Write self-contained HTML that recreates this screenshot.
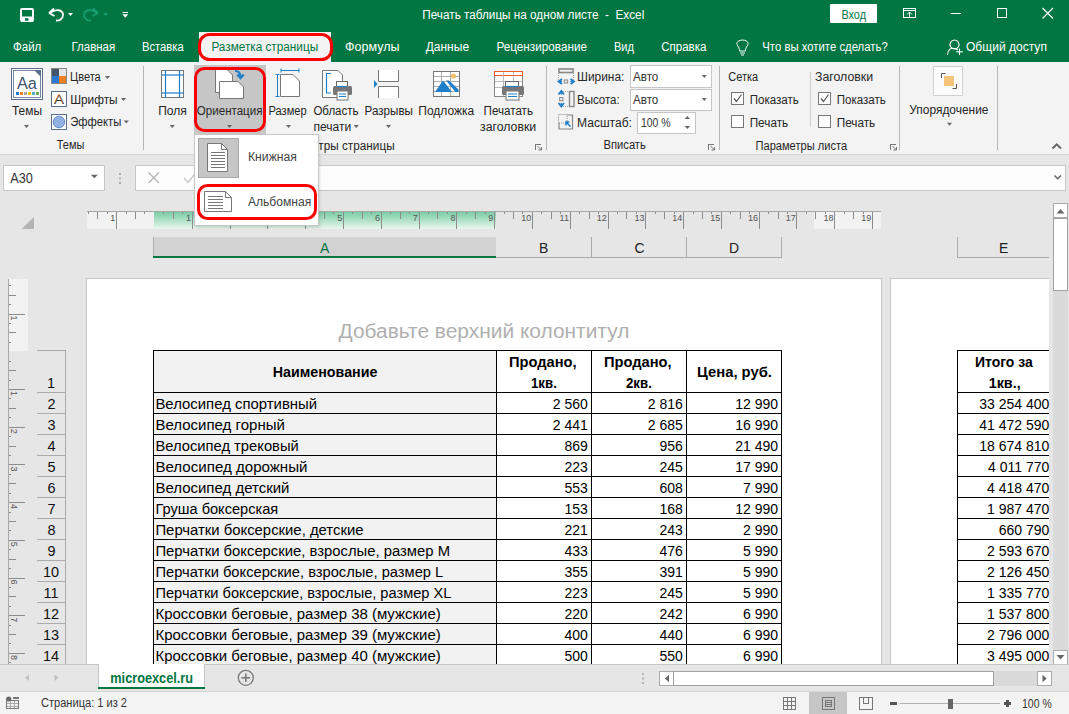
<!DOCTYPE html>
<html><head><meta charset="utf-8"><style>
html,body{margin:0;padding:0;width:1069px;height:714px;overflow:hidden;background:#e6e6e6}
svg{display:block;font-family:"Liberation Sans",sans-serif}
</style></head><body>
<svg width="1069" height="714" viewBox="0 0 1069 714">
<g shape-rendering="crispEdges">
<rect x="0" y="0" width="1069" height="714" fill="#e6e6e6" />
<rect x="0" y="0" width="1069" height="62" fill="#017642" />
<rect x="0" y="62" width="1069" height="92" fill="#f3f3f3" />
<line x1="0" y1="154.5" x2="1069" y2="154.5" stroke="#d6d6d6" stroke-width="1" />
</g>
<rect x="21" y="9" width="12" height="12" fill="none" stroke="#fff" stroke-width="2" rx="1" />
<rect x="21" y="16.5" width="12" height="5.5" fill="#fff" />
<rect x="25" y="18.2" width="3.5" height="2.5" fill="#017642" />
<path d="M50,13 C56,8 63,10 63,15 C63,19 59,21 56,20.5" fill="none" stroke="#fff" stroke-width="1.8" />
<path d="M49,13 L54,8.5 M49,13 L54.5,16" fill="none" stroke="#fff" stroke-width="1.8" />
<path d="M68.0,13.0 L73.0,13.0 L70.5,16.0 Z" fill="#fff" />
<path d="M97,13 C91,8 84,10 84,15 C84,19 88,21 91,20.5" fill="none" stroke="#1a9c70" stroke-width="1.8" />
<path d="M98,13 L93,8.5 M98,13 L92.5,16" fill="none" stroke="#1a9c70" stroke-width="1.8" />
<path d="M103.0,13.0 L108.0,13.0 L105.5,16.0 Z" fill="#1a9c70" />
<line x1="122.5" y1="12.5" x2="128" y2="12.5" stroke="#fff" stroke-width="1" />
<path d="M122.3,14.25 L128.3,14.25 L125.3,17.75 Z" fill="#fff" />
<text x="422.30" y="19" font-size="12" fill="#fff" textLength="221.95" lengthAdjust="spacingAndGlyphs" style="white-space:pre" >Печать таблицы на одном листе  -  Excel</text>
<rect x="830" y="4" width="47" height="19" fill="#fff" rx="1" />
<text x="841.40" y="18.5" font-size="12" fill="#017642" textLength="24.60" lengthAdjust="spacingAndGlyphs" style="white-space:pre" >Вход</text>
<rect x="903.5" y="8.5" width="12" height="9" fill="none" stroke="#fff" stroke-width="1" />
<line x1="903.5" y1="10.5" x2="915.5" y2="10.5" stroke="#fff" stroke-width="1" />
<path d="M909.5,17 V12 M907,14.5 L909.5,12 L912,14.5" fill="none" stroke="#fff" stroke-width="1" />
<line x1="950.5" y1="13.5" x2="961" y2="13.5" stroke="#fff" stroke-width="1" />
<rect x="997.5" y="8.5" width="9" height="9" fill="none" stroke="#fff" stroke-width="1" shape-rendering="crispEdges"/>
<path d="M1042.5,8 L1053,18.5 M1053,8 L1042.5,18.5" fill="none" stroke="#fff" stroke-width="1.1" />
<rect x="199" y="32" width="132" height="30" fill="#f3f3f3" />
<text x="13.00" y="51" font-size="12" fill="#fff" textLength="28.30" lengthAdjust="spacingAndGlyphs" style="white-space:pre" >Файл</text>
<text x="71.50" y="51" font-size="12" fill="#fff" textLength="43.68" lengthAdjust="spacingAndGlyphs" style="white-space:pre" >Главная</text>
<text x="142.00" y="51" font-size="12" fill="#fff" textLength="41.70" lengthAdjust="spacingAndGlyphs" style="white-space:pre" >Вставка</text>
<text x="345.00" y="51" font-size="12" fill="#fff" textLength="54.45" lengthAdjust="spacingAndGlyphs" style="white-space:pre" >Формулы</text>
<text x="425.70" y="51" font-size="12" fill="#fff" textLength="43.37" lengthAdjust="spacingAndGlyphs" style="white-space:pre" >Данные</text>
<text x="496.40" y="51" font-size="12" fill="#fff" textLength="90.58" lengthAdjust="spacingAndGlyphs" style="white-space:pre" >Рецензирование</text>
<text x="614.00" y="51" font-size="12" fill="#fff" textLength="20.00" lengthAdjust="spacingAndGlyphs" style="white-space:pre" >Вид</text>
<text x="661.20" y="51" font-size="12" fill="#fff" textLength="45.19" lengthAdjust="spacingAndGlyphs" style="white-space:pre" >Справка</text>
<text x="762.30" y="51" font-size="12" fill="#fff" textLength="125.39" lengthAdjust="spacingAndGlyphs" style="white-space:pre" >Что вы хотите сделать?</text>
<text x="966.00" y="51" font-size="12" fill="#fff" textLength="80.90" lengthAdjust="spacingAndGlyphs" style="white-space:pre" >Общий доступ</text>
<text x="211.40" y="51" font-size="12" fill="#017642" textLength="106.71" lengthAdjust="spacingAndGlyphs" style="white-space:pre" >Разметка страницы</text>
<rect x="199.5" y="34.5" width="132" height="25" fill="none" stroke="#fa0000" stroke-width="3" rx="10" />
<path d="M738.5,47 C736,44 736,40.5 742.5,40 C749,40.5 749,44 746.5,47 C745.5,48.5 745.5,50 745.5,51 H739.5 C739.5,50 739.5,48.5 738.5,47 Z" fill="none" stroke="#fff" stroke-width="1" />
<line x1="740" y1="53" x2="745" y2="53" stroke="#fff" stroke-width="1" />
<line x1="741" y1="55" x2="744" y2="55" stroke="#fff" stroke-width="1" />
<path d="M954.5,40 A4.5,4.5 0 1 1 954.49,40 Z" fill="none" stroke="#fff" stroke-width="1.1" />
<path d="M947.5,55 C948,49 951,47.5 954.5,48.5 C956,48.7 957,49.3 958,50" fill="none" stroke="#fff" stroke-width="1.1" />
<line x1="959.5" y1="48.5" x2="959.5" y2="55" stroke="#fff" stroke-width="1.1" />
<line x1="956.2" y1="51.8" x2="962.8" y2="51.8" stroke="#fff" stroke-width="1.1" />
<rect x="11.5" y="68.5" width="31" height="31" fill="#fff" stroke="#5a6e8c" stroke-width="1" />
<rect x="13.5" y="70.5" width="27" height="27" fill="none" stroke="#5a6e8c" stroke-width="0.8" />
<path d="M34,70 L41,70 L41,77 Z" fill="#5a6e8c" />
<text x="17.00" y="89" font-size="16" fill="#3f5573" textLength="19.90" lengthAdjust="spacingAndGlyphs" style="white-space:pre" >Aa</text>
<rect x="16" y="92" width="3" height="3" fill="#2a7ad5" />
<rect x="20" y="92" width="3" height="3" fill="#f07f20" />
<rect x="24" y="92" width="3" height="3" fill="#a5a5a5" />
<rect x="28" y="92" width="3" height="3" fill="#ffc000" />
<rect x="32" y="92" width="3" height="3" fill="#4bacc6" />
<rect x="36" y="92" width="3" height="3" fill="#70ad47" />
<text x="12.00" y="114.7" font-size="12" fill="#262626" textLength="30.02" lengthAdjust="spacingAndGlyphs" style="white-space:pre" >Темы</text>
<path d="M24.0,125.0 L29.0,125.0 L26.5,128.0 Z" fill="#666" />
<rect x="51.5" y="68.5" width="15" height="15" fill="none" stroke="#888" stroke-width="1" />
<rect x="52" y="69" width="7" height="7" fill="#44546a" />
<rect x="59" y="69" width="7" height="7" fill="#e7e6e6" />
<rect x="52" y="76" width="7" height="7" fill="#2a7ad5" />
<rect x="59" y="76" width="7" height="7" fill="#f07f20" />
<text x="70.00" y="81" font-size="12" fill="#262626" textLength="30.70" lengthAdjust="spacingAndGlyphs" style="white-space:pre" >Цвета</text>
<path d="M105.0,76.0 L110.0,76.0 L107.5,79.0 Z" fill="#666" />
<rect x="51.5" y="91.5" width="15" height="15" fill="#fff" stroke="#5a6e8c" stroke-width="1" />
<text x="54.00" y="103.5" font-size="12" fill="#333" textLength="10.00" lengthAdjust="spacingAndGlyphs" style="white-space:pre" >A</text>
<path d="M55,103 L59,94 L63,103" fill="none" stroke="#e07020" stroke-width="0.6" />
<text x="70.20" y="103.8" font-size="12" fill="#262626" textLength="47.42" lengthAdjust="spacingAndGlyphs" style="white-space:pre" >Шрифты</text>
<path d="M121.0,98.0 L126.0,98.0 L123.5,101.0 Z" fill="#666" />
<rect x="51.5" y="114.5" width="15" height="15" fill="#fff" stroke="#5a6e8c" stroke-width="1" />
<circle cx="59" cy="122" r="5.8" fill="#8fb0e0" stroke="#4a7cc8" stroke-width="0.8"/>
<text x="70.20" y="126" font-size="12" fill="#262626" textLength="51.09" lengthAdjust="spacingAndGlyphs" style="white-space:pre" >Эффекты</text>
<path d="M123.8,120.5 L128.8,120.5 L126.3,123.5 Z" fill="#666" />
<text x="56.80" y="149.4" font-size="12" fill="#262626" textLength="27.57" lengthAdjust="spacingAndGlyphs" style="white-space:pre" >Темы</text>
<line x1="143.5" y1="66" x2="143.5" y2="150" stroke="#b8b8b8" stroke-width="1" shape-rendering="crispEdges"/>
<rect x="161.5" y="70.5" width="22" height="27" fill="#fff" stroke="#777" stroke-width="1" />
<line x1="165.5" y1="70.5" x2="165.5" y2="97.5" stroke="#1f7ec8" stroke-width="1.2" />
<line x1="179.5" y1="70.5" x2="179.5" y2="97.5" stroke="#1f7ec8" stroke-width="1.2" />
<line x1="161.5" y1="75" x2="183.5" y2="75" stroke="#1f7ec8" stroke-width="1.2" />
<line x1="161.5" y1="93" x2="183.5" y2="93" stroke="#1f7ec8" stroke-width="1.2" />
<text x="158.20" y="114.7" font-size="12" fill="#262626" textLength="28.60" lengthAdjust="spacingAndGlyphs" style="white-space:pre" >Поля</text>
<path d="M169.8,125.0 L174.8,125.0 L172.3,128.0 Z" fill="#666" />
<rect x="194" y="65" width="72" height="69" fill="#c6c6c6" />
<path d="M215.5,69.5 H227 L232.5,75 V92.5 H215.5 Z" fill="#fff" stroke="#777" stroke-width="1" />
<path d="M219.5,81.5 H238 L243.5,87 V98.5 H219.5 Z" fill="#fff" stroke="#777" stroke-width="1" />
<path d="M235,71 C239,71 240.5,73 240.5,77" fill="none" stroke="#1f7ec8" stroke-width="2.2" />
<path d="M237.2,74.5 L240.5,78.2 L243.8,74.5" fill="none" stroke="#1f7ec8" stroke-width="2.2" />
<text x="196.80" y="114.7" font-size="12" fill="#262626" textLength="65.68" lengthAdjust="spacingAndGlyphs" style="white-space:pre" >Ориентация</text>
<path d="M227.0,125.0 L232.0,125.0 L229.5,128.0 Z" fill="#666" />
<rect x="195.5" y="68.5" width="69" height="62" fill="none" stroke="#fa0000" stroke-width="3" rx="9" />
<path d="M280.5,74.5 H293 L299.5,81 V96.5 H280.5 Z" fill="#fff" stroke="#777" stroke-width="1" />
<line x1="281" y1="70.5" x2="299" y2="70.5" stroke="#1f7ec8" stroke-width="1" />
<line x1="281" y1="68.5" x2="281" y2="72.5" stroke="#1f7ec8" stroke-width="1" />
<line x1="299" y1="68.5" x2="299" y2="72.5" stroke="#1f7ec8" stroke-width="1" />
<line x1="277.5" y1="74" x2="277.5" y2="96" stroke="#1f7ec8" stroke-width="1" />
<line x1="275.5" y1="74.5" x2="279.5" y2="74.5" stroke="#1f7ec8" stroke-width="1" />
<line x1="275.5" y1="96.5" x2="279.5" y2="96.5" stroke="#1f7ec8" stroke-width="1" />
<text x="268.50" y="114.7" font-size="12" fill="#262626" textLength="38.20" lengthAdjust="spacingAndGlyphs" style="white-space:pre" >Размер</text>
<path d="M286.0,125.0 L291.0,125.0 L288.5,128.0 Z" fill="#666" />
<path d="M322.5,70.5 H338 L342.5,75 V97.5 H322.5 Z" fill="#fff" stroke="#777" stroke-width="1" />
<path d="M331,73.5 H326.5 V93 H331" fill="none" stroke="#1f7ec8" stroke-width="1.2" />
<rect x="336.5" y="81.5" width="11" height="6" fill="#fff" stroke="#666" stroke-width="1" />
<rect x="333" y="86" width="19" height="9" fill="#777" rx="1.5" />
<line x1="337" y1="86.5" x2="347" y2="86.5" stroke="#1f7ec8" stroke-width="1.2" />
<rect x="337" y="91" width="11" height="9" fill="#fff" stroke="#777" stroke-width="1" />
<line x1="339" y1="94" x2="346" y2="94" stroke="#1f7ec8" stroke-width="1" />
<line x1="339" y1="96.5" x2="346" y2="96.5" stroke="#1f7ec8" stroke-width="1" />
<text x="313.40" y="114.7" font-size="12" fill="#262626" textLength="45.14" lengthAdjust="spacingAndGlyphs" style="white-space:pre" >Область</text>
<text x="313.40" y="130.8" font-size="12" fill="#262626" textLength="37.91" lengthAdjust="spacingAndGlyphs" style="white-space:pre" >печати</text>
<path d="M353.8,125.0 L358.8,125.0 L356.3,128.0 Z" fill="#666" />
<rect x="378.5" y="70" width="20" height="11" fill="#fff" />
<path d="M378.5,70 V81.5 H398.5 V70" fill="none" stroke="#777" stroke-width="1" />
<rect x="378.5" y="86.5" width="20" height="11.5" fill="#fff" />
<path d="M378.5,98 V86.5 H398.5 V98" fill="none" stroke="#777" stroke-width="1" />
<path d="M374,80 L377.5,84 L374,88 Z" fill="#1f7ec8" />
<text x="364.60" y="114.7" font-size="12" fill="#262626" textLength="48.30" lengthAdjust="spacingAndGlyphs" style="white-space:pre" >Разрывы</text>
<path d="M386.0,125.0 L391.0,125.0 L388.5,128.0 Z" fill="#666" />
<rect x="433.5" y="71.5" width="26" height="25" fill="#fff" stroke="#777" stroke-width="1" />
<line x1="434" y1="76.5" x2="459" y2="76.5" stroke="#999" stroke-width="0.8" />
<line x1="434" y1="81.5" x2="459" y2="81.5" stroke="#999" stroke-width="0.8" />
<line x1="434" y1="86.5" x2="459" y2="86.5" stroke="#999" stroke-width="0.8" />
<line x1="434" y1="91.5" x2="459" y2="91.5" stroke="#999" stroke-width="0.8" />
<line x1="441.5" y1="72" x2="441.5" y2="96" stroke="#999" stroke-width="0.8" />
<line x1="450.5" y1="72" x2="450.5" y2="96" stroke="#999" stroke-width="0.8" />
<circle cx="453.5" cy="76" r="2.6" fill="#f2c26a"/>
<path d="M435,92 L443,80.5 L452,92 Z" fill="#1f7ec8" />
<path d="M446,80.5 L449,80.5 L458.5,89.5 V92 H455.5 Z" fill="#1f7ec8" />
<text x="418.30" y="114.7" font-size="12" fill="#262626" textLength="55.87" lengthAdjust="spacingAndGlyphs" style="white-space:pre" >Подложка</text>
<rect x="494.5" y="71.5" width="28" height="25" fill="#fff" stroke="#888" stroke-width="1" />
<rect x="494.5" y="71.5" width="28" height="4" fill="#fff" stroke="#f05a28" stroke-width="1" />
<line x1="503.5" y1="72" x2="503.5" y2="96" stroke="#aaa" stroke-width="0.8" />
<line x1="513.5" y1="72" x2="513.5" y2="96" stroke="#aaa" stroke-width="0.8" />
<line x1="495" y1="81.5" x2="522" y2="81.5" stroke="#aaa" stroke-width="0.8" />
<line x1="495" y1="87.5" x2="522" y2="87.5" stroke="#aaa" stroke-width="0.8" />
<rect x="505.5" y="81.5" width="13" height="6" fill="#fff" stroke="#666" stroke-width="1" />
<rect x="502" y="86" width="22" height="9" fill="#777" rx="1.5" />
<line x1="506" y1="86.5" x2="518" y2="86.5" stroke="#1f7ec8" stroke-width="1.2" />
<rect x="506" y="91" width="13" height="9" fill="#fff" stroke="#777" stroke-width="1" />
<line x1="508" y1="94" x2="517" y2="94" stroke="#1f7ec8" stroke-width="1" />
<line x1="508" y1="96.5" x2="517" y2="96.5" stroke="#1f7ec8" stroke-width="1" />
<text x="483.60" y="114.7" font-size="12" fill="#262626" textLength="49.34" lengthAdjust="spacingAndGlyphs" style="white-space:pre" >Печатать</text>
<text x="480.00" y="130.8" font-size="12" fill="#262626" textLength="56.22" lengthAdjust="spacingAndGlyphs" style="white-space:pre" >заголовки</text>
<text x="276.00" y="149.8" font-size="12" fill="#262626" textLength="118.61" lengthAdjust="spacingAndGlyphs" style="white-space:pre" >Параметры страницы</text>
<path d="M535.5,149.5 V144.0 H541" fill="none" stroke="#777" stroke-width="1" shape-rendering="crispEdges"/>
<path d="M537.5,146.0 L541.5,150.0 M541.5,147.0 V150.0 H538.5" fill="none" stroke="#777" stroke-width="1" />
<line x1="546.5" y1="66" x2="546.5" y2="150" stroke="#b8b8b8" stroke-width="1" shape-rendering="crispEdges"/>
<rect x="559" y="69" width="14" height="3.5" fill="none" stroke="#888" stroke-width="1.6" />
<line x1="558.5" y1="73" x2="558.5" y2="80" stroke="#999" stroke-width="0.8" stroke-dasharray="1,1"/>
<line x1="573.5" y1="73" x2="573.5" y2="80" stroke="#999" stroke-width="0.8" stroke-dasharray="1,1"/>
<path d="M562,79 L558.5,81.5 L562,84 M570.5,79 L574,81.5 L570.5,84" fill="none" stroke="#1f7ec8" stroke-width="1.8" />
<line x1="559" y1="81.5" x2="562" y2="81.5" stroke="#1f7ec8" stroke-width="1.5" />
<line x1="570.5" y1="81.5" x2="573.5" y2="81.5" stroke="#1f7ec8" stroke-width="1.5" />
<rect x="564.3" y="80" width="3.4" height="3" fill="none" stroke="#888" stroke-width="1" />
<text x="577.00" y="81" font-size="12" fill="#262626" textLength="47.33" lengthAdjust="spacingAndGlyphs" style="white-space:pre" >Ширина:</text>
<rect x="630.5" y="65.5" width="81" height="22" fill="#fff" stroke="#c6c6c6" stroke-width="1" />
<text x="633.00" y="81" font-size="12" fill="#333" textLength="25.28" lengthAdjust="spacingAndGlyphs" style="white-space:pre" >Авто</text>
<path d="M701.8,75.0 L706.8,75.0 L704.3,78.0 Z" fill="#666" />
<rect x="569.5" y="91.5" width="4.5" height="15" fill="none" stroke="#888" stroke-width="1.4" />
<line x1="563" y1="91.5" x2="569" y2="91.5" stroke="#999" stroke-width="0.8" stroke-dasharray="1,1"/>
<line x1="563" y1="106.5" x2="569" y2="106.5" stroke="#999" stroke-width="0.8" stroke-dasharray="1,1"/>
<path d="M558.5,94.5 L561.3,91 L564,94.5 M558.5,103 L561.3,106.5 L564,103" fill="none" stroke="#1f7ec8" stroke-width="1.8" />
<line x1="561.3" y1="91.5" x2="561.3" y2="94.5" stroke="#1f7ec8" stroke-width="1.5" />
<line x1="561.3" y1="103" x2="561.3" y2="106" stroke="#1f7ec8" stroke-width="1.5" />
<rect x="559.7" y="97.5" width="3.2" height="3.2" fill="none" stroke="#888" stroke-width="1" />
<text x="577.00" y="103.8" font-size="12" fill="#262626" textLength="42.72" lengthAdjust="spacingAndGlyphs" style="white-space:pre" >Высота:</text>
<rect x="630.5" y="89.5" width="81" height="21" fill="#fff" stroke="#c6c6c6" stroke-width="1" />
<text x="633.00" y="103.8" font-size="12" fill="#333" textLength="25.28" lengthAdjust="spacingAndGlyphs" style="white-space:pre" >Авто</text>
<path d="M701.8,98.0 L706.8,98.0 L704.3,101.0 Z" fill="#666" />
<rect x="558.5" y="114.5" width="8.5" height="8.5" fill="none" stroke="#888" stroke-width="1" stroke-dasharray="1,1"/>
<path d="M567,115 H572.5 V129 H559 V123" fill="none" stroke="#888" stroke-width="1.2" />
<path d="M570.5,126.5 L566,122 M566,125.5 V122 H569.5" fill="none" stroke="#1f7ec8" stroke-width="1.5" />
<text x="577.00" y="126.5" font-size="12" fill="#262626" textLength="54.94" lengthAdjust="spacingAndGlyphs" style="white-space:pre" >Масштаб:</text>
<rect x="637.5" y="112.5" width="58" height="21" fill="#fff" stroke="#c6c6c6" stroke-width="1" />
<text x="641.00" y="126.5" font-size="12" fill="#333" textLength="29.61" lengthAdjust="spacingAndGlyphs" style="white-space:pre" >100 %</text>
<path d="M684.7,119 L687.35,116 L690,119 Z" fill="#666" />
<path d="M684.7,126 L690,126 L687.35,129 Z" fill="#666" />
<text x="603.50" y="149.2" font-size="12" fill="#262626" textLength="42.34" lengthAdjust="spacingAndGlyphs" style="white-space:pre" >Вписать</text>
<path d="M708.5,149.5 V144.0 H714" fill="none" stroke="#777" stroke-width="1" shape-rendering="crispEdges"/>
<path d="M710.5,146.0 L714.5,150.0 M714.5,147.0 V150.0 H711.5" fill="none" stroke="#777" stroke-width="1" />
<line x1="719.5" y1="66" x2="719.5" y2="150" stroke="#b8b8b8" stroke-width="1" shape-rendering="crispEdges"/>
<text x="728.30" y="80.8" font-size="12" fill="#262626" textLength="29.90" lengthAdjust="spacingAndGlyphs" style="white-space:pre" >Сетка</text>
<text x="815.00" y="80.8" font-size="12" fill="#262626" textLength="58.02" lengthAdjust="spacingAndGlyphs" style="white-space:pre" >Заголовки</text>
<rect x="731.5" y="92.5" width="12" height="12" fill="#fff" stroke="#777" stroke-width="1" />
<path d="M734.0,98.5 L736.5,101.5 L741.5,94.5" fill="none" stroke="#555" stroke-width="1.2" />
<rect x="731.5" y="115.5" width="12" height="12" fill="#fff" stroke="#777" stroke-width="1" />
<rect x="818.5" y="92.5" width="12" height="12" fill="#fff" stroke="#777" stroke-width="1" />
<path d="M821.0,98.5 L823.5,101.5 L828.5,94.5" fill="none" stroke="#555" stroke-width="1.2" />
<rect x="818.5" y="115.5" width="12" height="12" fill="#fff" stroke="#777" stroke-width="1" />
<text x="749.70" y="103.5" font-size="12" fill="#262626" textLength="49.04" lengthAdjust="spacingAndGlyphs" style="white-space:pre" >Показать</text>
<text x="749.70" y="126.6" font-size="12" fill="#262626" textLength="38.45" lengthAdjust="spacingAndGlyphs" style="white-space:pre" >Печать</text>
<text x="836.70" y="103.5" font-size="12" fill="#262626" textLength="49.14" lengthAdjust="spacingAndGlyphs" style="white-space:pre" >Показать</text>
<text x="836.70" y="126.6" font-size="12" fill="#262626" textLength="38.55" lengthAdjust="spacingAndGlyphs" style="white-space:pre" >Печать</text>
<line x1="810.5" y1="72" x2="810.5" y2="127" stroke="#d0d0d0" stroke-width="1" shape-rendering="crispEdges"/>
<text x="755.50" y="149.7" font-size="12" fill="#262626" textLength="91.60" lengthAdjust="spacingAndGlyphs" style="white-space:pre" >Параметры листа</text>
<path d="M890.5,149.5 V144.0 H896" fill="none" stroke="#777" stroke-width="1" shape-rendering="crispEdges"/>
<path d="M892.5,146.0 L896.5,150.0 M896.5,147.0 V150.0 H893.5" fill="none" stroke="#777" stroke-width="1" />
<line x1="899.5" y1="66" x2="899.5" y2="150" stroke="#b8b8b8" stroke-width="1" shape-rendering="crispEdges"/>
<rect x="933.5" y="66.5" width="29" height="29" fill="#fbfbfb" stroke="#d0d0d0" stroke-width="1" />
<rect x="944" y="76" width="10" height="10" fill="#f4c37a" />
<path d="M941.5,78 V73.5 H945.5" fill="none" stroke="#555" stroke-width="1" />
<path d="M956.5,84 V88.5 H952.5" fill="none" stroke="#555" stroke-width="1" />
<text x="909.30" y="113.6" font-size="12" fill="#262626" textLength="79.18" lengthAdjust="spacingAndGlyphs" style="white-space:pre" >Упорядочение</text>
<path d="M947.0,122.8 L952.0,122.8 L949.5,125.8 Z" fill="#666" />
<line x1="997.5" y1="66" x2="997.5" y2="150" stroke="#b8b8b8" stroke-width="1" shape-rendering="crispEdges"/>
<path d="M1052.5,148.5 L1056.7,144.3 L1061,148.5" fill="none" stroke="#666" stroke-width="2" />
<g shape-rendering="crispEdges">
<rect x="3.5" y="165.5" width="101" height="25" fill="#fff" stroke="#c6c6c6" stroke-width="1" />
<rect x="135.5" y="165.5" width="930" height="25" fill="#fdfdfd" stroke="#c6c6c6" stroke-width="1" />
</g>
<text x="10.30" y="183" font-size="14" fill="#333" textLength="22.51" lengthAdjust="spacingAndGlyphs" style="white-space:pre" >A30</text>
<path d="M90.8,174.75 L97.8,174.75 L94.3,178.25 Z" fill="#666" />
<rect x="119" y="173" width="2" height="2" fill="#b0b0b0" />
<rect x="119" y="177.5" width="2" height="2" fill="#b0b0b0" />
<rect x="119" y="182" width="2" height="2" fill="#b0b0b0" />
<path d="M148.5,172.5 L159,183 M159,172.5 L148.5,183" fill="none" stroke="#b4b4b4" stroke-width="1.4" />
<path d="M184,178 L188,182.5 L196,172.5" fill="none" stroke="#c8c8c8" stroke-width="1.4" />
<path d="M1054.5,175.5 L1057.7,178.7 L1061,175.5" fill="none" stroke="#666" stroke-width="1.6" />
<defs><linearGradient id="gr" x1="0" y1="0" x2="0" y2="1"><stop offset="0" stop-color="#79cda3"/><stop offset="1" stop-color="#e9f6ef"/></linearGradient></defs>
<g shape-rendering="crispEdges">
<rect x="87" y="212" width="67" height="17" fill="#f2f2f2" />
<rect x="814" y="212" width="67" height="17" fill="#f2f2f2" />
<rect x="154" y="212" width="342" height="17" fill="url(#gr)" />
<line x1="87" y1="211.5" x2="881" y2="211.5" stroke="#a8a8a8" stroke-width="1" />
<line x1="88.5" y1="212" x2="88.5" y2="213.5" stroke="#8c8c8c" stroke-width="1" />
<line x1="97.5" y1="212" x2="97.5" y2="219" stroke="#8c8c8c" stroke-width="1" />
<line x1="107.5" y1="212" x2="107.5" y2="213.5" stroke="#8c8c8c" stroke-width="1" />
<line x1="116.5" y1="212" x2="116.5" y2="229" stroke="#8c8c8c" stroke-width="1" />
<line x1="126.5" y1="212" x2="126.5" y2="213.5" stroke="#8c8c8c" stroke-width="1" />
<line x1="135.5" y1="212" x2="135.5" y2="219" stroke="#8c8c8c" stroke-width="1" />
<line x1="144.5" y1="212" x2="144.5" y2="213.5" stroke="#8c8c8c" stroke-width="1" />
<line x1="163.5" y1="212" x2="163.5" y2="213.5" stroke="#8c8c8c" stroke-width="1" />
<line x1="173.5" y1="212" x2="173.5" y2="219" stroke="#8c8c8c" stroke-width="1" />
<line x1="182.5" y1="212" x2="182.5" y2="213.5" stroke="#8c8c8c" stroke-width="1" />
<line x1="192.5" y1="212" x2="192.5" y2="229" stroke="#8c8c8c" stroke-width="1" />
<line x1="201.5" y1="212" x2="201.5" y2="213.5" stroke="#8c8c8c" stroke-width="1" />
<line x1="211.5" y1="212" x2="211.5" y2="219" stroke="#8c8c8c" stroke-width="1" />
<line x1="220.5" y1="212" x2="220.5" y2="213.5" stroke="#8c8c8c" stroke-width="1" />
<line x1="230.5" y1="212" x2="230.5" y2="229" stroke="#8c8c8c" stroke-width="1" />
<line x1="239.5" y1="212" x2="239.5" y2="213.5" stroke="#8c8c8c" stroke-width="1" />
<line x1="248.5" y1="212" x2="248.5" y2="219" stroke="#8c8c8c" stroke-width="1" />
<line x1="258.5" y1="212" x2="258.5" y2="213.5" stroke="#8c8c8c" stroke-width="1" />
<line x1="267.5" y1="212" x2="267.5" y2="229" stroke="#8c8c8c" stroke-width="1" />
<line x1="277.5" y1="212" x2="277.5" y2="213.5" stroke="#8c8c8c" stroke-width="1" />
<line x1="286.5" y1="212" x2="286.5" y2="219" stroke="#8c8c8c" stroke-width="1" />
<line x1="296.5" y1="212" x2="296.5" y2="213.5" stroke="#8c8c8c" stroke-width="1" />
<line x1="305.5" y1="212" x2="305.5" y2="229" stroke="#8c8c8c" stroke-width="1" />
<line x1="315.5" y1="212" x2="315.5" y2="213.5" stroke="#8c8c8c" stroke-width="1" />
<line x1="324.5" y1="212" x2="324.5" y2="219" stroke="#8c8c8c" stroke-width="1" />
<line x1="333.5" y1="212" x2="333.5" y2="213.5" stroke="#8c8c8c" stroke-width="1" />
<line x1="343.5" y1="212" x2="343.5" y2="229" stroke="#8c8c8c" stroke-width="1" />
<line x1="352.5" y1="212" x2="352.5" y2="213.5" stroke="#8c8c8c" stroke-width="1" />
<line x1="362.5" y1="212" x2="362.5" y2="219" stroke="#8c8c8c" stroke-width="1" />
<line x1="371.5" y1="212" x2="371.5" y2="213.5" stroke="#8c8c8c" stroke-width="1" />
<line x1="381.5" y1="212" x2="381.5" y2="229" stroke="#8c8c8c" stroke-width="1" />
<line x1="390.5" y1="212" x2="390.5" y2="213.5" stroke="#8c8c8c" stroke-width="1" />
<line x1="400.5" y1="212" x2="400.5" y2="219" stroke="#8c8c8c" stroke-width="1" />
<line x1="409.5" y1="212" x2="409.5" y2="213.5" stroke="#8c8c8c" stroke-width="1" />
<line x1="419.5" y1="212" x2="419.5" y2="229" stroke="#8c8c8c" stroke-width="1" />
<line x1="428.5" y1="212" x2="428.5" y2="213.5" stroke="#8c8c8c" stroke-width="1" />
<line x1="437.5" y1="212" x2="437.5" y2="219" stroke="#8c8c8c" stroke-width="1" />
<line x1="447.5" y1="212" x2="447.5" y2="213.5" stroke="#8c8c8c" stroke-width="1" />
<line x1="456.5" y1="212" x2="456.5" y2="229" stroke="#8c8c8c" stroke-width="1" />
<line x1="466.5" y1="212" x2="466.5" y2="213.5" stroke="#8c8c8c" stroke-width="1" />
<line x1="475.5" y1="212" x2="475.5" y2="219" stroke="#8c8c8c" stroke-width="1" />
<line x1="485.5" y1="212" x2="485.5" y2="213.5" stroke="#8c8c8c" stroke-width="1" />
<line x1="494.5" y1="212" x2="494.5" y2="229" stroke="#8c8c8c" stroke-width="1" />
<line x1="504.5" y1="212" x2="504.5" y2="213.5" stroke="#8c8c8c" stroke-width="1" />
<line x1="513.5" y1="212" x2="513.5" y2="219" stroke="#8c8c8c" stroke-width="1" />
<line x1="522.5" y1="212" x2="522.5" y2="213.5" stroke="#8c8c8c" stroke-width="1" />
<line x1="532.5" y1="212" x2="532.5" y2="229" stroke="#8c8c8c" stroke-width="1" />
<line x1="541.5" y1="212" x2="541.5" y2="213.5" stroke="#8c8c8c" stroke-width="1" />
<line x1="551.5" y1="212" x2="551.5" y2="219" stroke="#8c8c8c" stroke-width="1" />
<line x1="560.5" y1="212" x2="560.5" y2="213.5" stroke="#8c8c8c" stroke-width="1" />
<line x1="570.5" y1="212" x2="570.5" y2="229" stroke="#8c8c8c" stroke-width="1" />
<line x1="579.5" y1="212" x2="579.5" y2="213.5" stroke="#8c8c8c" stroke-width="1" />
<line x1="589.5" y1="212" x2="589.5" y2="219" stroke="#8c8c8c" stroke-width="1" />
<line x1="598.5" y1="212" x2="598.5" y2="213.5" stroke="#8c8c8c" stroke-width="1" />
<line x1="608.5" y1="212" x2="608.5" y2="229" stroke="#8c8c8c" stroke-width="1" />
<line x1="617.5" y1="212" x2="617.5" y2="213.5" stroke="#8c8c8c" stroke-width="1" />
<line x1="626.5" y1="212" x2="626.5" y2="219" stroke="#8c8c8c" stroke-width="1" />
<line x1="636.5" y1="212" x2="636.5" y2="213.5" stroke="#8c8c8c" stroke-width="1" />
<line x1="645.5" y1="212" x2="645.5" y2="229" stroke="#8c8c8c" stroke-width="1" />
<line x1="655.5" y1="212" x2="655.5" y2="213.5" stroke="#8c8c8c" stroke-width="1" />
<line x1="664.5" y1="212" x2="664.5" y2="219" stroke="#8c8c8c" stroke-width="1" />
<line x1="674.5" y1="212" x2="674.5" y2="213.5" stroke="#8c8c8c" stroke-width="1" />
<line x1="683.5" y1="212" x2="683.5" y2="229" stroke="#8c8c8c" stroke-width="1" />
<line x1="693.5" y1="212" x2="693.5" y2="213.5" stroke="#8c8c8c" stroke-width="1" />
<line x1="702.5" y1="212" x2="702.5" y2="219" stroke="#8c8c8c" stroke-width="1" />
<line x1="711.5" y1="212" x2="711.5" y2="213.5" stroke="#8c8c8c" stroke-width="1" />
<line x1="721.5" y1="212" x2="721.5" y2="229" stroke="#8c8c8c" stroke-width="1" />
<line x1="730.5" y1="212" x2="730.5" y2="213.5" stroke="#8c8c8c" stroke-width="1" />
<line x1="740.5" y1="212" x2="740.5" y2="219" stroke="#8c8c8c" stroke-width="1" />
<line x1="749.5" y1="212" x2="749.5" y2="213.5" stroke="#8c8c8c" stroke-width="1" />
<line x1="759.5" y1="212" x2="759.5" y2="229" stroke="#8c8c8c" stroke-width="1" />
<line x1="768.5" y1="212" x2="768.5" y2="213.5" stroke="#8c8c8c" stroke-width="1" />
<line x1="778.5" y1="212" x2="778.5" y2="219" stroke="#8c8c8c" stroke-width="1" />
<line x1="787.5" y1="212" x2="787.5" y2="213.5" stroke="#8c8c8c" stroke-width="1" />
<line x1="796.5" y1="212" x2="796.5" y2="229" stroke="#8c8c8c" stroke-width="1" />
<line x1="806.5" y1="212" x2="806.5" y2="213.5" stroke="#8c8c8c" stroke-width="1" />
<line x1="815.5" y1="212" x2="815.5" y2="219" stroke="#8c8c8c" stroke-width="1" />
<line x1="825.5" y1="212" x2="825.5" y2="213.5" stroke="#8c8c8c" stroke-width="1" />
<line x1="834.5" y1="212" x2="834.5" y2="229" stroke="#8c8c8c" stroke-width="1" />
<line x1="844.5" y1="212" x2="844.5" y2="213.5" stroke="#8c8c8c" stroke-width="1" />
<line x1="853.5" y1="212" x2="853.5" y2="219" stroke="#8c8c8c" stroke-width="1" />
<line x1="863.5" y1="212" x2="863.5" y2="213.5" stroke="#8c8c8c" stroke-width="1" />
<line x1="872.5" y1="212" x2="872.5" y2="229" stroke="#8c8c8c" stroke-width="1" />
</g>
<text x="185.95" y="221" font-size="9.5" fill="#555" textLength="5.02" lengthAdjust="spacingAndGlyphs" style="white-space:pre" >1</text>
<text x="223.75" y="221" font-size="9.5" fill="#555" textLength="5.02" lengthAdjust="spacingAndGlyphs" style="white-space:pre" >2</text>
<text x="261.55" y="221" font-size="9.5" fill="#555" textLength="5.02" lengthAdjust="spacingAndGlyphs" style="white-space:pre" >3</text>
<text x="299.35" y="221" font-size="9.5" fill="#555" textLength="5.02" lengthAdjust="spacingAndGlyphs" style="white-space:pre" >4</text>
<text x="337.15" y="221" font-size="9.5" fill="#555" textLength="5.02" lengthAdjust="spacingAndGlyphs" style="white-space:pre" >5</text>
<text x="374.95" y="221" font-size="9.5" fill="#555" textLength="5.02" lengthAdjust="spacingAndGlyphs" style="white-space:pre" >6</text>
<text x="412.75" y="221" font-size="9.5" fill="#555" textLength="5.02" lengthAdjust="spacingAndGlyphs" style="white-space:pre" >7</text>
<text x="450.55" y="221" font-size="9.5" fill="#555" textLength="5.02" lengthAdjust="spacingAndGlyphs" style="white-space:pre" >8</text>
<text x="488.35" y="221" font-size="9.5" fill="#555" textLength="5.02" lengthAdjust="spacingAndGlyphs" style="white-space:pre" >9</text>
<text x="521.13" y="221" font-size="9.5" fill="#555" textLength="10.04" lengthAdjust="spacingAndGlyphs" style="white-space:pre" >10</text>
<text x="559.60" y="221" font-size="9.5" fill="#555" textLength="9.37" lengthAdjust="spacingAndGlyphs" style="white-space:pre" >11</text>
<text x="596.73" y="221" font-size="9.5" fill="#555" textLength="10.04" lengthAdjust="spacingAndGlyphs" style="white-space:pre" >12</text>
<text x="634.53" y="221" font-size="9.5" fill="#555" textLength="10.04" lengthAdjust="spacingAndGlyphs" style="white-space:pre" >13</text>
<text x="672.33" y="221" font-size="9.5" fill="#555" textLength="10.04" lengthAdjust="spacingAndGlyphs" style="white-space:pre" >14</text>
<text x="710.13" y="221" font-size="9.5" fill="#555" textLength="10.04" lengthAdjust="spacingAndGlyphs" style="white-space:pre" >15</text>
<text x="747.93" y="221" font-size="9.5" fill="#555" textLength="10.04" lengthAdjust="spacingAndGlyphs" style="white-space:pre" >16</text>
<text x="785.73" y="221" font-size="9.5" fill="#555" textLength="10.04" lengthAdjust="spacingAndGlyphs" style="white-space:pre" >17</text>
<text x="823.53" y="221" font-size="9.5" fill="#555" textLength="10.04" lengthAdjust="spacingAndGlyphs" style="white-space:pre" >18</text>
<text x="861.33" y="221" font-size="9.5" fill="#555" textLength="10.04" lengthAdjust="spacingAndGlyphs" style="white-space:pre" >19</text>
<text x="110.35" y="221" font-size="9.5" fill="#555" textLength="5.02" lengthAdjust="spacingAndGlyphs" style="white-space:pre" >1</text>
<path d="M34,217 V229 H21.5 Z" fill="#b4b4b4" />
<g shape-rendering="crispEdges">
<rect x="9" y="279" width="19" height="72" fill="#f2f2f2" />
<line x1="8.5" y1="279" x2="8.5" y2="664" stroke="#a8a8a8" stroke-width="1" />
<line x1="9" y1="285.5" x2="10.5" y2="285.5" stroke="#8c8c8c" stroke-width="1" />
<line x1="9" y1="295.5" x2="16" y2="295.5" stroke="#8c8c8c" stroke-width="1" />
<line x1="9" y1="304.5" x2="10.5" y2="304.5" stroke="#8c8c8c" stroke-width="1" />
<line x1="9" y1="314.5" x2="25" y2="314.5" stroke="#8c8c8c" stroke-width="1" />
<line x1="9" y1="323.5" x2="10.5" y2="323.5" stroke="#8c8c8c" stroke-width="1" />
<line x1="9" y1="332.5" x2="16" y2="332.5" stroke="#8c8c8c" stroke-width="1" />
<line x1="9" y1="342.5" x2="10.5" y2="342.5" stroke="#8c8c8c" stroke-width="1" />
<line x1="9" y1="361.5" x2="10.5" y2="361.5" stroke="#8c8c8c" stroke-width="1" />
<line x1="9" y1="370.5" x2="16" y2="370.5" stroke="#8c8c8c" stroke-width="1" />
<line x1="9" y1="380.5" x2="10.5" y2="380.5" stroke="#8c8c8c" stroke-width="1" />
<line x1="9" y1="389.5" x2="25" y2="389.5" stroke="#8c8c8c" stroke-width="1" />
<line x1="9" y1="398.5" x2="10.5" y2="398.5" stroke="#8c8c8c" stroke-width="1" />
<line x1="9" y1="408.5" x2="16" y2="408.5" stroke="#8c8c8c" stroke-width="1" />
<line x1="9" y1="417.5" x2="10.5" y2="417.5" stroke="#8c8c8c" stroke-width="1" />
<line x1="9" y1="427.5" x2="25" y2="427.5" stroke="#8c8c8c" stroke-width="1" />
<line x1="9" y1="436.5" x2="10.5" y2="436.5" stroke="#8c8c8c" stroke-width="1" />
<line x1="9" y1="446.5" x2="16" y2="446.5" stroke="#8c8c8c" stroke-width="1" />
<line x1="9" y1="455.5" x2="10.5" y2="455.5" stroke="#8c8c8c" stroke-width="1" />
<line x1="9" y1="464.5" x2="25" y2="464.5" stroke="#8c8c8c" stroke-width="1" />
<line x1="9" y1="474.5" x2="10.5" y2="474.5" stroke="#8c8c8c" stroke-width="1" />
<line x1="9" y1="483.5" x2="16" y2="483.5" stroke="#8c8c8c" stroke-width="1" />
<line x1="9" y1="493.5" x2="10.5" y2="493.5" stroke="#8c8c8c" stroke-width="1" />
<line x1="9" y1="502.5" x2="25" y2="502.5" stroke="#8c8c8c" stroke-width="1" />
<line x1="9" y1="512.5" x2="10.5" y2="512.5" stroke="#8c8c8c" stroke-width="1" />
<line x1="9" y1="521.5" x2="16" y2="521.5" stroke="#8c8c8c" stroke-width="1" />
<line x1="9" y1="530.5" x2="10.5" y2="530.5" stroke="#8c8c8c" stroke-width="1" />
<line x1="9" y1="540.5" x2="25" y2="540.5" stroke="#8c8c8c" stroke-width="1" />
<line x1="9" y1="549.5" x2="10.5" y2="549.5" stroke="#8c8c8c" stroke-width="1" />
<line x1="9" y1="559.5" x2="16" y2="559.5" stroke="#8c8c8c" stroke-width="1" />
<line x1="9" y1="568.5" x2="10.5" y2="568.5" stroke="#8c8c8c" stroke-width="1" />
<line x1="9" y1="578.5" x2="25" y2="578.5" stroke="#8c8c8c" stroke-width="1" />
<line x1="9" y1="587.5" x2="10.5" y2="587.5" stroke="#8c8c8c" stroke-width="1" />
<line x1="9" y1="596.5" x2="16" y2="596.5" stroke="#8c8c8c" stroke-width="1" />
<line x1="9" y1="606.5" x2="10.5" y2="606.5" stroke="#8c8c8c" stroke-width="1" />
<line x1="9" y1="615.5" x2="25" y2="615.5" stroke="#8c8c8c" stroke-width="1" />
<line x1="9" y1="625.5" x2="10.5" y2="625.5" stroke="#8c8c8c" stroke-width="1" />
<line x1="9" y1="634.5" x2="16" y2="634.5" stroke="#8c8c8c" stroke-width="1" />
<line x1="9" y1="643.5" x2="10.5" y2="643.5" stroke="#8c8c8c" stroke-width="1" />
<line x1="9" y1="653.5" x2="25" y2="653.5" stroke="#8c8c8c" stroke-width="1" />
<line x1="9" y1="662.5" x2="10.5" y2="662.5" stroke="#8c8c8c" stroke-width="1" />
</g>
<text x="315.6" y="-10.5" font-size="9" fill="#555" transform="rotate(90)">1</text>
<text x="391.0" y="-10.5" font-size="9" fill="#555" transform="rotate(90)">1</text>
<text x="428.70000000000005" y="-10.5" font-size="9" fill="#555" transform="rotate(90)">2</text>
<text x="466.40000000000003" y="-10.5" font-size="9" fill="#555" transform="rotate(90)">3</text>
<text x="504.1" y="-10.5" font-size="9" fill="#555" transform="rotate(90)">4</text>
<text x="541.8" y="-10.5" font-size="9" fill="#555" transform="rotate(90)">5</text>
<text x="579.5" y="-10.5" font-size="9" fill="#555" transform="rotate(90)">6</text>
<text x="617.2" y="-10.5" font-size="9" fill="#555" transform="rotate(90)">7</text>
<text x="654.9000000000001" y="-10.5" font-size="9" fill="#555" transform="rotate(90)">8</text>
<g shape-rendering="crispEdges">
<rect x="153" y="237" width="343" height="20" fill="#d2d2d2" />
<line x1="153.5" y1="237" x2="153.5" y2="257" stroke="#ababab" stroke-width="1" />
<rect x="153" y="256" width="343" height="2" fill="#017642" />
<line x1="496" y1="257.5" x2="782" y2="257.5" stroke="#ababab" stroke-width="1" />
<line x1="591.5" y1="237" x2="591.5" y2="258" stroke="#ababab" stroke-width="1" />
<line x1="686.5" y1="237" x2="686.5" y2="258" stroke="#ababab" stroke-width="1" />
<line x1="781.5" y1="237" x2="781.5" y2="258" stroke="#ababab" stroke-width="1" />
<line x1="957.5" y1="237" x2="957.5" y2="258" stroke="#ababab" stroke-width="1" />
<line x1="957" y1="257.5" x2="1049" y2="257.5" stroke="#ababab" stroke-width="1" />
</g>
<text x="320.00" y="252.6" font-size="14" fill="#017642" textLength="9.34" lengthAdjust="spacingAndGlyphs" style="white-space:pre" >A</text>
<text x="539.00" y="252.6" font-size="14" fill="#222" textLength="9.34" lengthAdjust="spacingAndGlyphs" style="white-space:pre" >B</text>
<text x="634.50" y="252.6" font-size="14" fill="#222" textLength="10.11" lengthAdjust="spacingAndGlyphs" style="white-space:pre" >C</text>
<text x="729.00" y="252.6" font-size="14" fill="#222" textLength="10.11" lengthAdjust="spacingAndGlyphs" style="white-space:pre" >D</text>
<text x="999.00" y="252.6" font-size="14" fill="#222" textLength="9.34" lengthAdjust="spacingAndGlyphs" style="white-space:pre" >E</text>
<g shape-rendering="crispEdges">
<rect x="86.5" y="278.5" width="795" height="400" fill="#fff" stroke="#c8c8c8" stroke-width="1" />
<rect x="890.5" y="278.5" width="200" height="400" fill="#fff" stroke="#c8c8c8" stroke-width="1" />
<rect x="1049" y="270" width="20" height="400" fill="#e6e6e6" />
<line x1="37" y1="350.5" x2="66" y2="350.5" stroke="#ababab" stroke-width="1" />
<line x1="65.5" y1="350" x2="65.5" y2="664" stroke="#ababab" stroke-width="1" />
<line x1="37" y1="392.5" x2="66" y2="392.5" stroke="#ababab" stroke-width="1" />
<line x1="37" y1="413.5" x2="66" y2="413.5" stroke="#ababab" stroke-width="1" />
<line x1="37" y1="434.5" x2="66" y2="434.5" stroke="#ababab" stroke-width="1" />
<line x1="37" y1="455.5" x2="66" y2="455.5" stroke="#ababab" stroke-width="1" />
<line x1="37" y1="476.5" x2="66" y2="476.5" stroke="#ababab" stroke-width="1" />
<line x1="37" y1="497.5" x2="66" y2="497.5" stroke="#ababab" stroke-width="1" />
<line x1="37" y1="518.5" x2="66" y2="518.5" stroke="#ababab" stroke-width="1" />
<line x1="37" y1="539.5" x2="66" y2="539.5" stroke="#ababab" stroke-width="1" />
<line x1="37" y1="560.5" x2="66" y2="560.5" stroke="#ababab" stroke-width="1" />
<line x1="37" y1="581.5" x2="66" y2="581.5" stroke="#ababab" stroke-width="1" />
<line x1="37" y1="602.5" x2="66" y2="602.5" stroke="#ababab" stroke-width="1" />
<line x1="37" y1="623.5" x2="66" y2="623.5" stroke="#ababab" stroke-width="1" />
<line x1="37" y1="644.5" x2="66" y2="644.5" stroke="#ababab" stroke-width="1" />
<line x1="37" y1="665.5" x2="66" y2="665.5" stroke="#ababab" stroke-width="1" />
</g>
<text x="338.50" y="338" font-size="20" fill="#b0b0b0" textLength="290.90" lengthAdjust="spacingAndGlyphs" style="white-space:pre" >Добавьте верхний колонтитул</text>
<g shape-rendering="crispEdges">
<rect x="153" y="350" width="343" height="314" fill="#f2f2f2" />
</g>
<text x="47.00" y="388" font-size="14.5" fill="#111" textLength="8.06" lengthAdjust="spacingAndGlyphs" style="white-space:pre" >1</text>
<text x="47.50" y="409" font-size="14.5" fill="#111" textLength="8.06" lengthAdjust="spacingAndGlyphs" style="white-space:pre" >2</text>
<text x="155.43" y="409" font-size="14" fill="#000" textLength="161.74" lengthAdjust="spacingAndGlyphs" style="white-space:pre" >Велосипед спортивный</text>
<text x="552.75" y="409" font-size="14" fill="#000" textLength="35.03" lengthAdjust="spacingAndGlyphs" style="white-space:pre" >2 560</text>
<text x="647.75" y="409" font-size="14" fill="#000" textLength="35.03" lengthAdjust="spacingAndGlyphs" style="white-space:pre" >2 816</text>
<text x="735.27" y="409" font-size="14" fill="#000" textLength="42.82" lengthAdjust="spacingAndGlyphs" style="white-space:pre" >12 990</text>
<text x="979.22" y="409" font-size="14" fill="#000" textLength="70.07" lengthAdjust="spacingAndGlyphs" style="white-space:pre" >33 254 400</text>
<text x="47.50" y="430" font-size="14.5" fill="#111" textLength="8.06" lengthAdjust="spacingAndGlyphs" style="white-space:pre" >3</text>
<text x="155.43" y="430" font-size="14" fill="#000" textLength="129.45" lengthAdjust="spacingAndGlyphs" style="white-space:pre" >Велосипед горный</text>
<text x="552.75" y="430" font-size="14" fill="#000" textLength="35.03" lengthAdjust="spacingAndGlyphs" style="white-space:pre" >2 441</text>
<text x="647.75" y="430" font-size="14" fill="#000" textLength="35.03" lengthAdjust="spacingAndGlyphs" style="white-space:pre" >2 685</text>
<text x="735.27" y="430" font-size="14" fill="#000" textLength="42.82" lengthAdjust="spacingAndGlyphs" style="white-space:pre" >16 990</text>
<text x="979.22" y="430" font-size="14" fill="#000" textLength="70.07" lengthAdjust="spacingAndGlyphs" style="white-space:pre" >41 472 590</text>
<text x="47.50" y="451" font-size="14.5" fill="#111" textLength="8.06" lengthAdjust="spacingAndGlyphs" style="white-space:pre" >4</text>
<text x="155.45" y="451" font-size="14" fill="#000" textLength="143.32" lengthAdjust="spacingAndGlyphs" style="white-space:pre" >Велосипед трековый</text>
<text x="564.43" y="451" font-size="14" fill="#000" textLength="23.36" lengthAdjust="spacingAndGlyphs" style="white-space:pre" >869</text>
<text x="659.43" y="451" font-size="14" fill="#000" textLength="23.36" lengthAdjust="spacingAndGlyphs" style="white-space:pre" >956</text>
<text x="735.27" y="451" font-size="14" fill="#000" textLength="42.82" lengthAdjust="spacingAndGlyphs" style="white-space:pre" >21 490</text>
<text x="979.22" y="451" font-size="14" fill="#000" textLength="70.07" lengthAdjust="spacingAndGlyphs" style="white-space:pre" >18 674 810</text>
<text x="47.50" y="472" font-size="14.5" fill="#111" textLength="8.06" lengthAdjust="spacingAndGlyphs" style="white-space:pre" >5</text>
<text x="155.42" y="472" font-size="14" fill="#000" textLength="152.06" lengthAdjust="spacingAndGlyphs" style="white-space:pre" >Велосипед дорожный</text>
<text x="564.43" y="472" font-size="14" fill="#000" textLength="23.36" lengthAdjust="spacingAndGlyphs" style="white-space:pre" >223</text>
<text x="659.43" y="472" font-size="14" fill="#000" textLength="23.36" lengthAdjust="spacingAndGlyphs" style="white-space:pre" >245</text>
<text x="735.27" y="472" font-size="14" fill="#000" textLength="42.82" lengthAdjust="spacingAndGlyphs" style="white-space:pre" >17 990</text>
<text x="988.04" y="472" font-size="14" fill="#000" textLength="61.24" lengthAdjust="spacingAndGlyphs" style="white-space:pre" >4 011 770</text>
<text x="47.50" y="493" font-size="14.5" fill="#111" textLength="8.06" lengthAdjust="spacingAndGlyphs" style="white-space:pre" >6</text>
<text x="155.43" y="493" font-size="14" fill="#000" textLength="134.05" lengthAdjust="spacingAndGlyphs" style="white-space:pre" >Велосипед детский</text>
<text x="564.43" y="493" font-size="14" fill="#000" textLength="23.36" lengthAdjust="spacingAndGlyphs" style="white-space:pre" >553</text>
<text x="659.43" y="493" font-size="14" fill="#000" textLength="23.36" lengthAdjust="spacingAndGlyphs" style="white-space:pre" >608</text>
<text x="743.05" y="493" font-size="14" fill="#000" textLength="35.03" lengthAdjust="spacingAndGlyphs" style="white-space:pre" >7 990</text>
<text x="987.00" y="493" font-size="14" fill="#000" textLength="62.28" lengthAdjust="spacingAndGlyphs" style="white-space:pre" >4 418 470</text>
<text x="47.50" y="514" font-size="14.5" fill="#111" textLength="8.06" lengthAdjust="spacingAndGlyphs" style="white-space:pre" >7</text>
<text x="155.46" y="514" font-size="14" fill="#000" textLength="122.75" lengthAdjust="spacingAndGlyphs" style="white-space:pre" >Груша боксерская</text>
<text x="564.43" y="514" font-size="14" fill="#000" textLength="23.36" lengthAdjust="spacingAndGlyphs" style="white-space:pre" >153</text>
<text x="659.43" y="514" font-size="14" fill="#000" textLength="23.36" lengthAdjust="spacingAndGlyphs" style="white-space:pre" >168</text>
<text x="735.27" y="514" font-size="14" fill="#000" textLength="42.82" lengthAdjust="spacingAndGlyphs" style="white-space:pre" >12 990</text>
<text x="987.00" y="514" font-size="14" fill="#000" textLength="62.28" lengthAdjust="spacingAndGlyphs" style="white-space:pre" >1 987 470</text>
<text x="47.50" y="535" font-size="14.5" fill="#111" textLength="8.06" lengthAdjust="spacingAndGlyphs" style="white-space:pre" >8</text>
<text x="155.44" y="535" font-size="14" fill="#000" textLength="208.03" lengthAdjust="spacingAndGlyphs" style="white-space:pre" >Перчатки боксерские, детские</text>
<text x="564.43" y="535" font-size="14" fill="#000" textLength="23.36" lengthAdjust="spacingAndGlyphs" style="white-space:pre" >221</text>
<text x="659.43" y="535" font-size="14" fill="#000" textLength="23.36" lengthAdjust="spacingAndGlyphs" style="white-space:pre" >243</text>
<text x="743.05" y="535" font-size="14" fill="#000" textLength="35.03" lengthAdjust="spacingAndGlyphs" style="white-space:pre" >2 990</text>
<text x="998.68" y="535" font-size="14" fill="#000" textLength="50.61" lengthAdjust="spacingAndGlyphs" style="white-space:pre" >660 790</text>
<text x="47.50" y="556" font-size="14.5" fill="#111" textLength="8.06" lengthAdjust="spacingAndGlyphs" style="white-space:pre" >9</text>
<text x="155.44" y="556" font-size="14" fill="#000" textLength="294.56" lengthAdjust="spacingAndGlyphs" style="white-space:pre" >Перчатки боксерские, взрослые, размер M</text>
<text x="564.43" y="556" font-size="14" fill="#000" textLength="23.36" lengthAdjust="spacingAndGlyphs" style="white-space:pre" >433</text>
<text x="659.43" y="556" font-size="14" fill="#000" textLength="23.36" lengthAdjust="spacingAndGlyphs" style="white-space:pre" >476</text>
<text x="743.05" y="556" font-size="14" fill="#000" textLength="35.03" lengthAdjust="spacingAndGlyphs" style="white-space:pre" >5 990</text>
<text x="987.00" y="556" font-size="14" fill="#000" textLength="62.28" lengthAdjust="spacingAndGlyphs" style="white-space:pre" >2 593 670</text>
<text x="42.97" y="577" font-size="14.5" fill="#111" textLength="16.13" lengthAdjust="spacingAndGlyphs" style="white-space:pre" >10</text>
<text x="155.45" y="577" font-size="14" fill="#000" textLength="287.82" lengthAdjust="spacingAndGlyphs" style="white-space:pre" >Перчатки боксерские, взрослые, размер L</text>
<text x="564.43" y="577" font-size="14" fill="#000" textLength="23.36" lengthAdjust="spacingAndGlyphs" style="white-space:pre" >355</text>
<text x="659.43" y="577" font-size="14" fill="#000" textLength="23.36" lengthAdjust="spacingAndGlyphs" style="white-space:pre" >391</text>
<text x="743.05" y="577" font-size="14" fill="#000" textLength="35.03" lengthAdjust="spacingAndGlyphs" style="white-space:pre" >5 990</text>
<text x="987.00" y="577" font-size="14" fill="#000" textLength="62.28" lengthAdjust="spacingAndGlyphs" style="white-space:pre" >2 126 450</text>
<text x="43.51" y="598" font-size="14.5" fill="#111" textLength="15.05" lengthAdjust="spacingAndGlyphs" style="white-space:pre" >11</text>
<text x="155.46" y="598" font-size="14" fill="#000" textLength="295.92" lengthAdjust="spacingAndGlyphs" style="white-space:pre" >Перчатки боксерские, взрослые, размер XL</text>
<text x="564.43" y="598" font-size="14" fill="#000" textLength="23.36" lengthAdjust="spacingAndGlyphs" style="white-space:pre" >223</text>
<text x="659.43" y="598" font-size="14" fill="#000" textLength="23.36" lengthAdjust="spacingAndGlyphs" style="white-space:pre" >245</text>
<text x="743.05" y="598" font-size="14" fill="#000" textLength="35.03" lengthAdjust="spacingAndGlyphs" style="white-space:pre" >5 990</text>
<text x="987.00" y="598" font-size="14" fill="#000" textLength="62.28" lengthAdjust="spacingAndGlyphs" style="white-space:pre" >1 335 770</text>
<text x="42.97" y="619" font-size="14.5" fill="#111" textLength="16.13" lengthAdjust="spacingAndGlyphs" style="white-space:pre" >12</text>
<text x="155.43" y="619" font-size="14" fill="#000" textLength="285.28" lengthAdjust="spacingAndGlyphs" style="white-space:pre" >Кроссовки беговые, размер 38 (мужские)</text>
<text x="564.43" y="619" font-size="14" fill="#000" textLength="23.36" lengthAdjust="spacingAndGlyphs" style="white-space:pre" >220</text>
<text x="659.43" y="619" font-size="14" fill="#000" textLength="23.36" lengthAdjust="spacingAndGlyphs" style="white-space:pre" >242</text>
<text x="743.05" y="619" font-size="14" fill="#000" textLength="35.03" lengthAdjust="spacingAndGlyphs" style="white-space:pre" >6 990</text>
<text x="987.00" y="619" font-size="14" fill="#000" textLength="62.28" lengthAdjust="spacingAndGlyphs" style="white-space:pre" >1 537 800</text>
<text x="42.97" y="640" font-size="14.5" fill="#111" textLength="16.13" lengthAdjust="spacingAndGlyphs" style="white-space:pre" >13</text>
<text x="155.43" y="640" font-size="14" fill="#000" textLength="285.28" lengthAdjust="spacingAndGlyphs" style="white-space:pre" >Кроссовки беговые, размер 39 (мужские)</text>
<text x="564.43" y="640" font-size="14" fill="#000" textLength="23.36" lengthAdjust="spacingAndGlyphs" style="white-space:pre" >400</text>
<text x="659.43" y="640" font-size="14" fill="#000" textLength="23.36" lengthAdjust="spacingAndGlyphs" style="white-space:pre" >440</text>
<text x="743.05" y="640" font-size="14" fill="#000" textLength="35.03" lengthAdjust="spacingAndGlyphs" style="white-space:pre" >6 990</text>
<text x="987.00" y="640" font-size="14" fill="#000" textLength="62.28" lengthAdjust="spacingAndGlyphs" style="white-space:pre" >2 796 000</text>
<text x="42.97" y="661" font-size="14.5" fill="#111" textLength="16.13" lengthAdjust="spacingAndGlyphs" style="white-space:pre" >14</text>
<text x="155.43" y="661" font-size="14" fill="#000" textLength="285.28" lengthAdjust="spacingAndGlyphs" style="white-space:pre" >Кроссовки беговые, размер 40 (мужские)</text>
<text x="564.43" y="661" font-size="14" fill="#000" textLength="23.36" lengthAdjust="spacingAndGlyphs" style="white-space:pre" >500</text>
<text x="659.43" y="661" font-size="14" fill="#000" textLength="23.36" lengthAdjust="spacingAndGlyphs" style="white-space:pre" >550</text>
<text x="743.05" y="661" font-size="14" fill="#000" textLength="35.03" lengthAdjust="spacingAndGlyphs" style="white-space:pre" >6 990</text>
<text x="987.00" y="661" font-size="14" fill="#000" textLength="62.28" lengthAdjust="spacingAndGlyphs" style="white-space:pre" >3 495 000</text>
<text x="272.80" y="377" font-size="14" font-weight="bold" fill="#000" textLength="104.58" lengthAdjust="spacingAndGlyphs" style="white-space:pre" >Наименование</text>
<text x="509.00" y="367" font-size="14" font-weight="bold" fill="#000" textLength="67.63" lengthAdjust="spacingAndGlyphs" style="white-space:pre" >Продано,</text>
<text x="531.00" y="388" font-size="14" font-weight="bold" fill="#000" textLength="25.84" lengthAdjust="spacingAndGlyphs" style="white-space:pre" >1кв.</text>
<text x="604.00" y="367" font-size="14" font-weight="bold" fill="#000" textLength="67.63" lengthAdjust="spacingAndGlyphs" style="white-space:pre" >Продано,</text>
<text x="626.00" y="388" font-size="14" font-weight="bold" fill="#000" textLength="25.84" lengthAdjust="spacingAndGlyphs" style="white-space:pre" >2кв.</text>
<text x="697.00" y="377" font-size="14" font-weight="bold" fill="#000" textLength="74.94" lengthAdjust="spacingAndGlyphs" style="white-space:pre" >Цена, руб.</text>
<text x="975.00" y="367" font-size="14" font-weight="bold" fill="#000" textLength="57.79" lengthAdjust="spacingAndGlyphs" style="white-space:pre" >Итого за</text>
<text x="988.70" y="388" font-size="14" font-weight="bold" fill="#000" textLength="32.01" lengthAdjust="spacingAndGlyphs" style="white-space:pre" >1кв.,</text>
<g shape-rendering="crispEdges">
<line x1="153.5" y1="350" x2="153.5" y2="664" stroke="#000" stroke-width="1" />
<line x1="496.5" y1="350" x2="496.5" y2="664" stroke="#000" stroke-width="1" />
<line x1="591.5" y1="350" x2="591.5" y2="664" stroke="#000" stroke-width="1" />
<line x1="686.5" y1="350" x2="686.5" y2="664" stroke="#000" stroke-width="1" />
<line x1="781.5" y1="350" x2="781.5" y2="664" stroke="#000" stroke-width="1" />
<line x1="957.5" y1="350" x2="957.5" y2="664" stroke="#000" stroke-width="1" />
<line x1="153" y1="350.5" x2="782" y2="350.5" stroke="#000" stroke-width="1" />
<line x1="957" y1="350.5" x2="1049" y2="350.5" stroke="#000" stroke-width="1" />
<line x1="153" y1="392.5" x2="782" y2="392.5" stroke="#000" stroke-width="1" />
<line x1="957" y1="392.5" x2="1049" y2="392.5" stroke="#000" stroke-width="1" />
<line x1="153" y1="413.5" x2="782" y2="413.5" stroke="#000" stroke-width="1" />
<line x1="957" y1="413.5" x2="1049" y2="413.5" stroke="#000" stroke-width="1" />
<line x1="153" y1="434.5" x2="782" y2="434.5" stroke="#000" stroke-width="1" />
<line x1="957" y1="434.5" x2="1049" y2="434.5" stroke="#000" stroke-width="1" />
<line x1="153" y1="455.5" x2="782" y2="455.5" stroke="#000" stroke-width="1" />
<line x1="957" y1="455.5" x2="1049" y2="455.5" stroke="#000" stroke-width="1" />
<line x1="153" y1="476.5" x2="782" y2="476.5" stroke="#000" stroke-width="1" />
<line x1="957" y1="476.5" x2="1049" y2="476.5" stroke="#000" stroke-width="1" />
<line x1="153" y1="497.5" x2="782" y2="497.5" stroke="#000" stroke-width="1" />
<line x1="957" y1="497.5" x2="1049" y2="497.5" stroke="#000" stroke-width="1" />
<line x1="153" y1="518.5" x2="782" y2="518.5" stroke="#000" stroke-width="1" />
<line x1="957" y1="518.5" x2="1049" y2="518.5" stroke="#000" stroke-width="1" />
<line x1="153" y1="539.5" x2="782" y2="539.5" stroke="#000" stroke-width="1" />
<line x1="957" y1="539.5" x2="1049" y2="539.5" stroke="#000" stroke-width="1" />
<line x1="153" y1="560.5" x2="782" y2="560.5" stroke="#000" stroke-width="1" />
<line x1="957" y1="560.5" x2="1049" y2="560.5" stroke="#000" stroke-width="1" />
<line x1="153" y1="581.5" x2="782" y2="581.5" stroke="#000" stroke-width="1" />
<line x1="957" y1="581.5" x2="1049" y2="581.5" stroke="#000" stroke-width="1" />
<line x1="153" y1="602.5" x2="782" y2="602.5" stroke="#000" stroke-width="1" />
<line x1="957" y1="602.5" x2="1049" y2="602.5" stroke="#000" stroke-width="1" />
<line x1="153" y1="623.5" x2="782" y2="623.5" stroke="#000" stroke-width="1" />
<line x1="957" y1="623.5" x2="1049" y2="623.5" stroke="#000" stroke-width="1" />
<line x1="153" y1="644.5" x2="782" y2="644.5" stroke="#000" stroke-width="1" />
<line x1="957" y1="644.5" x2="1049" y2="644.5" stroke="#000" stroke-width="1" />
<line x1="153" y1="665.5" x2="782" y2="665.5" stroke="#000" stroke-width="1" />
<line x1="957" y1="665.5" x2="1049" y2="665.5" stroke="#000" stroke-width="1" />
<rect x="0" y="664" width="1069" height="50" fill="#e6e6e6" />
</g>
<g shape-rendering="crispEdges">
<rect x="1053" y="203" width="15" height="461" fill="#dadada" />
<rect x="1053.5" y="203.5" width="14" height="14" fill="#fff" stroke="#ababab" stroke-width="1" />
<rect x="1053.5" y="218.5" width="14" height="72" fill="#fff" stroke="#a0a0a0" stroke-width="1.2" />
<rect x="1053.5" y="650.5" width="14" height="14" fill="#fff" stroke="#ababab" stroke-width="1" />
</g>
<path d="M1056.5,213.5 L1060.5,209 L1064.5,213.5 Z" fill="#666" />
<path d="M1056.5,655 L1064.5,655 L1060.5,659.5 Z" fill="#666" />
<g shape-rendering="crispEdges">
<rect x="0" y="664" width="1069" height="28" fill="#e6e6e6" />
<line x1="0" y1="664.5" x2="1069" y2="664.5" stroke="#c6c6c6" stroke-width="1" />
<rect x="98" y="664" width="107" height="25" fill="#fff" />
<line x1="98.5" y1="664" x2="98.5" y2="689" stroke="#c6c6c6" stroke-width="1" />
<line x1="204.5" y1="664" x2="204.5" y2="689" stroke="#c6c6c6" stroke-width="1" />
<rect x="98" y="686.5" width="107" height="2.5" fill="#017642" />
<rect x="0" y="692" width="1069" height="22" fill="#f3f3f3" />
<line x1="0" y1="691.5" x2="1069" y2="691.5" stroke="#d4d4d4" stroke-width="1" />
</g>
<path d="M29,674.5 L25,677.8 L29,681 Z" fill="#c0c0c0" />
<path d="M54.5,674.5 L58.5,677.8 L54.5,681 Z" fill="#c0c0c0" />
<text x="110.30" y="682.5" font-size="14" font-weight="bold" fill="#017642" textLength="82.70" lengthAdjust="spacingAndGlyphs" style="white-space:pre" >microexcel.ru</text>
<circle cx="245.8" cy="677.8" r="7.5" fill="none" stroke="#7a7a7a" stroke-width="1.3"/>
<line x1="241.5" y1="677.8" x2="250.1" y2="677.8" stroke="#7a7a7a" stroke-width="1.6" />
<line x1="245.8" y1="673.5" x2="245.8" y2="682.1" stroke="#7a7a7a" stroke-width="1.6" />
<rect x="642" y="673" width="2" height="2" fill="#b4b4b4" />
<rect x="642" y="677.5" width="2" height="2" fill="#b4b4b4" />
<rect x="642" y="682" width="2" height="2" fill="#b4b4b4" />
<g shape-rendering="crispEdges">
<rect x="659.5" y="671.5" width="14" height="14" fill="#fff" stroke="#ababab" stroke-width="1" />
<rect x="674" y="671" width="363" height="15" fill="#dadada" />
<rect x="673.5" y="671.5" width="320" height="14" fill="#fff" stroke="#a0a0a0" stroke-width="1.2" />
<rect x="1037.5" y="671.5" width="14" height="14" fill="#fff" stroke="#ababab" stroke-width="1" />
</g>
<path d="M669,674.8 L664.8,678.5 L669,682.2 Z" fill="#666" />
<path d="M1042.5,674.8 L1046.7,678.5 L1042.5,682.2 Z" fill="#666" />
<circle cx="8.7" cy="699" r="2.6" fill="#666"/>
<g shape-rendering="crispEdges">
<rect x="13" y="697" width="5.5" height="2" fill="#777" />
<rect x="6.5" y="700.5" width="12" height="8" fill="none" stroke="#777" stroke-width="1" />
<line x1="10.5" y1="701" x2="10.5" y2="708" stroke="#aaa" stroke-width="1" />
<line x1="14.5" y1="701" x2="14.5" y2="708" stroke="#aaa" stroke-width="1" />
<line x1="7" y1="703.5" x2="18" y2="703.5" stroke="#aaa" stroke-width="1" />
<line x1="7" y1="706" x2="18" y2="706" stroke="#aaa" stroke-width="1" />
</g>
<text x="41.00" y="706.5" font-size="12" fill="#333" textLength="86.00" lengthAdjust="spacingAndGlyphs" style="white-space:pre" >Страница: 1 из 2</text>
<g shape-rendering="crispEdges">
<rect x="809" y="692" width="38" height="22" fill="#c6c6c6" />
<rect x="783.5" y="697.5" width="12" height="12" fill="none" stroke="#777" stroke-width="1" />
<line x1="787.5" y1="698" x2="787.5" y2="709" stroke="#777" stroke-width="1" />
<line x1="791.5" y1="698" x2="791.5" y2="709" stroke="#777" stroke-width="1" />
<line x1="784" y1="701.5" x2="795" y2="701.5" stroke="#777" stroke-width="1" />
<line x1="784" y1="705.5" x2="795" y2="705.5" stroke="#777" stroke-width="1" />
<rect x="822.5" y="697.5" width="12" height="12" fill="none" stroke="#777" stroke-width="1" />
<rect x="825.5" y="700.5" width="6" height="6" fill="none" stroke="#777" stroke-width="1" />
<line x1="826" y1="702.5" x2="831" y2="702.5" stroke="#777" stroke-width="1" />
<line x1="826" y1="704.5" x2="831" y2="704.5" stroke="#777" stroke-width="1" />
<rect x="859.5" y="697.5" width="13" height="12" fill="none" stroke="#777" stroke-width="1" />
<path d="M863.5,698 V703.5 H868.5 V698" fill="none" stroke="#777" stroke-width="1" />
<rect x="890" y="702" width="6.5" height="2.5" fill="#555" />
<line x1="900" y1="703.5" x2="1000" y2="703.5" stroke="#b0b0b0" stroke-width="1" />
<rect x="948" y="699" width="5" height="10" fill="#666" />
<rect x="1003.5" y="702" width="7.5" height="2.5" fill="#555" />
<rect x="1006" y="699.5" width="2.5" height="7.5" fill="#555" />
</g>
<text x="1022.00" y="708" font-size="12" fill="#333" textLength="29.71" lengthAdjust="spacingAndGlyphs" style="white-space:pre" >100 %</text>
<defs><filter id="sh" x="-10%" y="-10%" width="130%" height="130%"><feGaussianBlur stdDeviation="1.5"/></filter></defs>
<rect x="196" y="136" width="124" height="92" fill="#000" opacity="0.12" filter="url(#sh)"/>
<g shape-rendering="crispEdges">
<rect x="194.5" y="134.5" width="124" height="91" fill="#fff" stroke="#c6c6c6" stroke-width="1" />
<rect x="198.5" y="138.5" width="40" height="39" fill="#c6c6c6" stroke="#a8a8a8" stroke-width="1" />
</g>
<path d="M207.5,143.5 H221.5 L227.5,149.5 V171.5 H207.5 Z" fill="#fff" stroke="#777" stroke-width="1" />
<path d="M221.5,143.5 V149.5 H227.5" fill="none" stroke="#777" stroke-width="1" />
<line x1="210.5" y1="152.5" x2="224.5" y2="152.5" stroke="#777" stroke-width="1" shape-rendering="crispEdges"/>
<line x1="210.5" y1="155.5" x2="224.5" y2="155.5" stroke="#777" stroke-width="1" shape-rendering="crispEdges"/>
<line x1="210.5" y1="158.5" x2="224.5" y2="158.5" stroke="#777" stroke-width="1" shape-rendering="crispEdges"/>
<line x1="210.5" y1="161.5" x2="224.5" y2="161.5" stroke="#777" stroke-width="1" shape-rendering="crispEdges"/>
<line x1="210.5" y1="164.5" x2="224.5" y2="164.5" stroke="#777" stroke-width="1" shape-rendering="crispEdges"/>
<line x1="210.5" y1="167.5" x2="224.5" y2="167.5" stroke="#777" stroke-width="1" shape-rendering="crispEdges"/>
<text x="248.00" y="161.2" font-size="12" fill="#444" textLength="48.91" lengthAdjust="spacingAndGlyphs" style="white-space:pre" >Книжная</text>
<path d="M204.5,191.5 H225.5 L231.5,197.5 V211.5 H204.5 Z" fill="#fff" stroke="#777" stroke-width="1" />
<path d="M225.5,191.5 V197.5 H231.5" fill="none" stroke="#777" stroke-width="1" />
<line x1="207.5" y1="196.5" x2="222.5" y2="196.5" stroke="#777" stroke-width="1" shape-rendering="crispEdges"/>
<line x1="207.5" y1="199.5" x2="222.5" y2="199.5" stroke="#777" stroke-width="1" shape-rendering="crispEdges"/>
<line x1="207.5" y1="202.5" x2="222.5" y2="202.5" stroke="#777" stroke-width="1" shape-rendering="crispEdges"/>
<line x1="207.5" y1="205.5" x2="222.5" y2="205.5" stroke="#777" stroke-width="1" shape-rendering="crispEdges"/>
<line x1="207.5" y1="208.5" x2="222.5" y2="208.5" stroke="#777" stroke-width="1" shape-rendering="crispEdges"/>
<text x="248.00" y="205.7" font-size="12" fill="#444" textLength="63.20" lengthAdjust="spacingAndGlyphs" style="white-space:pre" >Альбомная</text>
<rect x="198.5" y="185.5" width="117" height="33" fill="none" stroke="#fa0000" stroke-width="3" rx="9" />
</svg>
</body></html>
